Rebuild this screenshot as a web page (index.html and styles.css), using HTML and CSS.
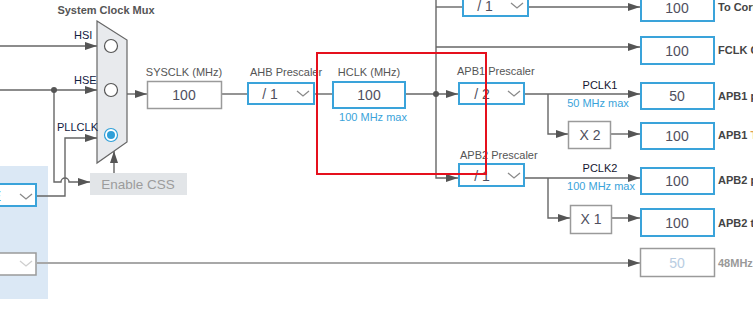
FILE: index.html
```html
<!DOCTYPE html>
<html lang="en">
<head>
    <meta charset="UTF-8">
    <meta name="viewport" content="width=device-width, initial-scale=1.0">
    <title>Clock Configuration</title>
    <link rel="stylesheet" href="styles.css">
</head>
<body>
    <div class="canvas">
        <svg class="diagram" width="753" height="315" viewBox="0 0 753 315">
            <defs>
                <marker id="arrow" markerUnits="userSpaceOnUse" markerWidth="12" markerHeight="8" refX="12" refY="4" orient="auto">
                    <path d="M0 0 L12 4 L0 8 z" class="arrowhead"/>
                </marker>
            </defs>

            <!-- source selector panel -->
            <rect class="panel" x="0" y="166" width="48" height="133"/>
            <rect class="select" x="-40" y="184" width="76" height="22"/>
            <text class="select-value" x="1" y="196" text-anchor="end">HSE</text>
            <polyline class="chevron" points="20,194 26,199 32,194"/>
            <rect class="select off" x="-40" y="253" width="76" height="22"/>
            <polyline class="chevron light" points="20,261 26,266 32,261"/>

            <!-- wires -->
            <path class="wire" d="M0 46 H97" marker-end="url(#arrow)"/>
            <path class="wire" d="M0 90 H97" marker-end="url(#arrow)"/>
            <path class="wire" d="M54 90 V182 H61 A4 4 0 0 1 69 182 H90" marker-end="url(#arrow)"/>
            <path class="wire" d="M37 196 H65 V138 H97" marker-end="url(#arrow)"/>
            <path class="wire" d="M114 173 V151" marker-end="url(#arrow)"/>
            <path class="wire" d="M127 94 H147" marker-end="url(#arrow)"/>
            <path class="wire" d="M222 94 H247"/>
            <path class="wire" d="M315 94 H332"/>
            <path class="wire" d="M406 94 H458" marker-end="url(#arrow)"/>
            <path class="wire" d="M436 0 V178 H458" marker-end="url(#arrow)"/>
            <path class="wire" d="M436 7 H462"/>
            <path class="wire" d="M529 7 H640" marker-end="url(#arrow)"/>
            <path class="wire" d="M436 47 H640" marker-end="url(#arrow)"/>
            <path class="wire" d="M525 94 H640" marker-end="url(#arrow)"/>
            <path class="wire" d="M548 94 V134 H568" marker-end="url(#arrow)"/>
            <path class="wire" d="M611 134 H640" marker-end="url(#arrow)"/>
            <path class="wire" d="M525 178 H640" marker-end="url(#arrow)"/>
            <path class="wire" d="M548 178 V218 H570" marker-end="url(#arrow)"/>
            <path class="wire" d="M612 218 H640" marker-end="url(#arrow)"/>
            <path class="wire dim" d="M37 263 H640" marker-end="url(#arrow)"/>
            <circle class="joint" cx="54" cy="90" r="3"/>
            <circle class="joint" cx="436" cy="94" r="3"/>

            <!-- system clock mux -->
            <text class="title" x="106" y="10" text-anchor="middle">System Clock Mux</text>
            <polygon class="mux" points="97,21 127,40 127,142 97,163"/>
            <circle class="radio" cx="111" cy="46" r="6.5"/>
            <circle class="radio" cx="111" cy="90" r="6.5"/>
            <circle class="radio on" cx="111" cy="135" r="6.5"/>
            <circle class="radio-dot" cx="111" cy="135" r="4"/>
            <text class="src" x="74" y="35">HSI</text>
            <text class="src" x="74" y="80">HSE</text>
            <text class="src" x="57" y="127">PLLCLK</text>

            <rect class="button" x="90" y="173" width="97" height="22"/>
            <text class="button-text" x="138" y="184" text-anchor="middle">Enable CSS</text>

            <!-- sysclk / ahb / hclk -->
            <text class="label" x="184" y="72" text-anchor="middle">SYSCLK (MHz)</text>
            <rect class="box" x="147.5" y="81.5" width="74" height="27"/>
            <text class="value" x="184" y="95" text-anchor="middle">100</text>

            <text class="label" x="250" y="72">AHB Prescaler</text>
            <rect class="select" x="248" y="83" width="66" height="21"/>
            <text class="value" x="270" y="94" text-anchor="middle">/ 1</text>
            <polyline class="chevron" points="297,91 303,96 309,91"/>

            <text class="label" x="369" y="72" text-anchor="middle">HCLK (MHz)</text>
            <rect class="select" x="333" y="82" width="72" height="26"/>
            <text class="value" x="369" y="95" text-anchor="middle">100</text>
            <text class="max" x="373" y="117" text-anchor="middle">100 MHz max</text>

            <!-- prescalers -->
            <rect class="select" x="463" y="-6" width="65" height="22"/>
            <text class="value" x="485" y="6" text-anchor="middle">/ 1</text>
            <polyline class="chevron" points="511,3 517,8 523,3"/>

            <text class="label" x="457" y="71">APB1 Prescaler</text>
            <rect class="select" x="459" y="83" width="65" height="21"/>
            <text class="value" x="482" y="94" text-anchor="middle">/ 2</text>
            <polyline class="chevron" points="508,91 514,96 520,91"/>

            <text class="label" x="460" y="155">APB2 Prescaler</text>
            <rect class="select" x="459" y="164" width="65" height="22"/>
            <text class="value" x="482" y="176" text-anchor="middle">/ 1</text>
            <polyline class="chevron" points="508,173 514,178 520,173"/>

            <text class="bus" x="600" y="85" text-anchor="middle">PCLK1</text>
            <text class="max" x="598" y="103" text-anchor="middle">50 MHz max</text>
            <text class="bus" x="600" y="168" text-anchor="middle">PCLK2</text>
            <text class="max" x="601" y="186" text-anchor="middle">100 MHz max</text>

            <rect class="box" x="568.5" y="121.5" width="42" height="27"/>
            <text class="value" x="590" y="135" text-anchor="middle">X 2</text>
            <rect class="box" x="570.5" y="205.5" width="41" height="28"/>
            <text class="value" x="591" y="219" text-anchor="middle">X 1</text>

            <!-- outputs -->
            <rect class="select" x="641" y="-5" width="73" height="26"/>
            <text class="value" x="677" y="8" text-anchor="middle">100</text>
            <text class="out" x="718" y="7">To Cortex System timer (MHz)</text>

            <rect class="select" x="641" y="37" width="73" height="27"/>
            <text class="value" x="677" y="51" text-anchor="middle">100</text>
            <text class="out" x="718" y="50">FCLK Cortex clock (MHz)</text>

            <rect class="select" x="641" y="83" width="73" height="26"/>
            <text class="value" x="677" y="96" text-anchor="middle">50</text>
            <text class="out" x="718" y="96">APB1 peripheral clocks (MHz)</text>

            <rect class="select" x="641" y="123" width="73" height="26"/>
            <text class="value" x="677" y="136" text-anchor="middle">100</text>
            <text class="out" x="718" y="135">APB1 <tspan class="warn">T</tspan>imer clocks (MHz)</text>

            <rect class="select" x="641" y="168" width="73" height="26"/>
            <text class="value" x="677" y="181" text-anchor="middle">100</text>
            <text class="out" x="718" y="180">APB2 peripheral clocks (MHz)</text>

            <rect class="select" x="641" y="209" width="73" height="27"/>
            <text class="value" x="677" y="223" text-anchor="middle">100</text>
            <text class="out" x="718" y="223">APB2 timer clocks (MHz)</text>

            <rect class="box" x="640.5" y="248.5" width="74" height="28"/>
            <text class="value faint" x="677" y="263" text-anchor="middle">50</text>
            <text class="out off" x="718" y="263">48MHz clocks (MHz)</text>

            <!-- highlight -->
            <rect class="highlight" x="317" y="53" width="169" height="121"/>
        </svg>
    </div>
</body>
</html>
```

FILE: styles.css
```css
body {
    margin: 0;
    padding: 0;
    background-color: #ffffff;
    font-family: "Liberation Sans", Arial, sans-serif;
    overflow: hidden;
}
.canvas {
    width: 753px;
    height: 315px;
}
.diagram {
    display: block;
}
.diagram text {
    dominant-baseline: central;
}
.panel {
    fill: #dbe8f5;
}
.select {
    fill: #ffffff;
    stroke: #3aa3da;
    stroke-width: 2;
}
.select.off {
    stroke: #9a9a9a;
    stroke-width: 1.5;
}
.select-value {
    fill: #3aa3da;
    font-size: 14px;
}
.chevron {
    fill: none;
    stroke: #8a8a8a;
    stroke-width: 1.3;
}
.chevron.light {
    stroke: #cfcfcf;
}
.wire {
    fill: none;
    stroke: #666666;
    stroke-width: 1.4;
}
.wire.dim {
    stroke: #a8a8a8;
    stroke-width: 2;
}
.arrowhead {
    fill: #555555;
}
.joint {
    fill: #555555;
}
.title {
    fill: #555555;
    font-size: 11px;
    font-weight: bold;
}
.mux {
    fill: #e8eaed;
    stroke: #666666;
    stroke-width: 1.2;
}
.radio {
    fill: #ffffff;
    stroke: #555555;
    stroke-width: 1.2;
}
.radio.on {
    stroke: #2f9fd8;
}
.radio-dot {
    fill: #2f9fd8;
}
.src {
    fill: #10203f;
    font-size: 11px;
}
.button {
    fill: #e2e5e8;
}
.button-text {
    fill: #9c9c9c;
    font-size: 13.5px;
}
.label {
    fill: #555555;
    font-size: 11px;
}
.box {
    fill: #ffffff;
    stroke: #9a9a9a;
    stroke-width: 1.5;
}
.value {
    fill: #4f4f5e;
    font-size: 14px;
}
.value.faint {
    fill: #b9cde2;
}
.max {
    fill: #3aa3da;
    font-size: 11px;
}
.bus {
    fill: #151530;
    font-size: 11px;
}
.out {
    fill: #444444;
    font-size: 11px;
    font-weight: bold;
}
.out.off {
    fill: #999999;
}
.warn {
    fill: #e0a050;
}
.highlight {
    fill: none;
    stroke: #e5101d;
    stroke-width: 2;
}
```
